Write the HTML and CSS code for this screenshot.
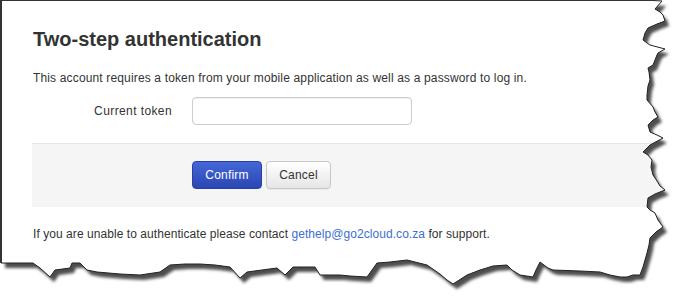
FILE: index.html
```html
<!DOCTYPE html>
<html>
<head>
<meta charset="utf-8">
<link rel="stylesheet" href="styles.css">
</head>
<body>
<div class="page">
  <h1 class="title">Two-step authentication</h1>
  <p class="intro">This account requires a token from your mobile application as well as a password to log in.</p>
  <div class="row">
    <label class="label" for="token">Current token</label>
    <input class="input" id="token" type="text">
  </div>
  <div class="actions">
    <button class="btn btn-primary">Confirm</button>
    <button class="btn btn-default">Cancel</button>
  </div>
  <p class="help">If you are unable to authenticate please contact <a class="link" href="#">gethelp@go2cloud.co.za</a> for support.</p>
</div>
<svg class="tear" width="689" height="305" viewBox="0 0 689 305" xmlns="http://www.w3.org/2000/svg">
  <defs>
    <path id="paper" d="M1,0.5 L653,0.5 L662,1 L655,9 L660,12 L663,15 L665,21 L657,24 L648,28 L645,33 L643,40 L647,43 L650,45 L665,49 L658,53 L657,55 L655,60 L653,65 L648,68 L649,72 L650,80 L648,86 L647,95 L647,100 L653,107 L655,112 L658,117 L653,120 L648,125 L650,132 L657,135 L663,138 L650,145 L643,152 L648,155 L652,160 L651,167 L653,175 L657,181 L660,186 L665,190 L655,194 L648,198 L647,207 L650,210 L655,213 L658,220 L663,227 L656,232 L650,238 L649,245 L647,253 L645,260 L643,267 L640,275 L633,275 L627,277 L620,277 L610,275 L600,272 L580,271 L553,270 L548,268 L540,262 L536,270 L533,277 L520,275 L512,270 L507,265 L493,266 L480,270 L467,275 L453,284 L447,280 L440,274 L427,265 L407,260 L390,262 L377,263 L372,270 L367,277 L350,276 L340,275 L320,275 L315,267 L293,267 L285,275 L277,268 L262,270 L247,272 L240,278 L230,267 L215,265 L200,264 L185,264 L170,265 L160,272 L140,275 L120,274 L97,272 L87,270 L80,263 L72,263 L70,268 L55,270 L50,277 L40,268 L33,263 L20,263 L10,263 L3,263 L1,263 Z"/>
    <clipPath id="outside">
      <path clip-rule="evenodd" d="M0,0 L689,0 L689,305 L0,305 Z M1,0.5 L653,0.5 L662,1 L655,9 L660,12 L663,15 L665,21 L657,24 L648,28 L645,33 L643,40 L647,43 L650,45 L665,49 L658,53 L657,55 L655,60 L653,65 L648,68 L649,72 L650,80 L648,86 L647,95 L647,100 L653,107 L655,112 L658,117 L653,120 L648,125 L650,132 L657,135 L663,138 L650,145 L643,152 L648,155 L652,160 L651,167 L653,175 L657,181 L660,186 L665,190 L655,194 L648,198 L647,207 L650,210 L655,213 L658,220 L663,227 L656,232 L650,238 L649,245 L647,253 L645,260 L643,267 L640,275 L633,275 L627,277 L620,277 L610,275 L600,272 L580,271 L553,270 L548,268 L540,262 L536,270 L533,277 L520,275 L512,270 L507,265 L493,266 L480,270 L467,275 L453,284 L447,280 L440,274 L427,265 L407,260 L390,262 L377,263 L372,270 L367,277 L350,276 L340,275 L320,275 L315,267 L293,267 L285,275 L277,268 L262,270 L247,272 L240,278 L230,267 L215,265 L200,264 L185,264 L170,265 L160,272 L140,275 L120,274 L97,272 L87,270 L80,263 L72,263 L70,268 L55,270 L50,277 L40,268 L33,263 L20,263 L10,263 L3,263 L1,263 Z"/>
    </clipPath>
    <filter id="blur" x="-5%" y="-5%" width="110%" height="110%">
      <feGaussianBlur stdDeviation="1.6"/>
    </filter>
  </defs>
  <g clip-path="url(#outside)">
    <rect x="0" y="0" width="689" height="305" fill="#ffffff"/>
    <use href="#paper" transform="translate(4,5)" fill="#4d4d4d" filter="url(#blur)"/>
  </g>
  <use href="#paper" fill="none" stroke="#222222" stroke-width="1"/>
  <rect x="0" y="0" width="2" height="263" fill="#333333"/>
  <rect x="0" y="0" width="655" height="1" fill="#333333"/>
</svg>
</body>
</html>
```
FILE: styles.css
```css
html, body {
  margin: 0;
  padding: 0;
  background: #ffffff;
}
body {
  width: 689px;
  height: 305px;
  overflow: hidden;
  position: relative;
  font-family: "Liberation Sans", Arial, sans-serif;
  color: #333333;
}
.page {
  padding: 27px 0 0 32px;
}
.title {
  margin: 0;
  font-size: 20px;
  line-height: 24px;
  font-weight: bold;
  color: #333333;
  padding-left: 1px;
}
.intro {
  margin: 19px 0 0 1px;
  font-size: 12px;
  line-height: 16px;
  letter-spacing: 0.15px;
}
.row {
  display: grid;
  grid-template-columns: 140px 220px;
  column-gap: 20px;
  align-items: center;
  margin-top: 11px;
}
.label {
  text-align: right;
  font-size: 12px;
  line-height: 16px;
  letter-spacing: 0.4px;
  color: #333333;
}
.input {
  box-sizing: border-box;
  width: 220px;
  height: 28px;
  margin: 0;
  border: 1px solid #cccccc;
  border-radius: 4px;
  background: #ffffff;
  box-shadow: inset 0 1px 1px rgba(0,0,0,0.06);
  outline: none;
}
.actions {
  margin-top: 18px;
  border-top: 1px solid #e5e5e5;
  background: #f5f5f5;
  padding: 17px 0 18px 160px;
  display: flex;
  gap: 4px;
}
.btn {
  box-sizing: border-box;
  height: 28px;
  margin: 0;
  border-radius: 4px;
  font-family: "Liberation Sans", Arial, sans-serif;
  font-size: 12px;
  line-height: 16px;
  padding: 0 8px;
  cursor: pointer;
  letter-spacing: 0.2px;
}
.btn-primary {
  width: 70px;
  color: #ffffff;
  border: 1px solid #2a3fa6;
  background: linear-gradient(#4468d6, #2a46b3);
}
.btn-default {
  width: 65px;
  color: #333333;
  border: 1px solid #c8c8c8;
  background: linear-gradient(#ffffff, #e6e6e6);
  box-shadow: inset 0 1px 0 rgba(255,255,255,0.2), 0 1px 1px rgba(0,0,0,0.05);
}
.help {
  margin: 19px 0 0 1px;
  font-size: 12px;
  line-height: 16px;
  letter-spacing: 0.06px;
}
.link {
  color: #3b6fd0;
  text-decoration: none;
}
.tear {
  position: absolute;
  left: 0;
  top: 0;
  pointer-events: none;
}
```
